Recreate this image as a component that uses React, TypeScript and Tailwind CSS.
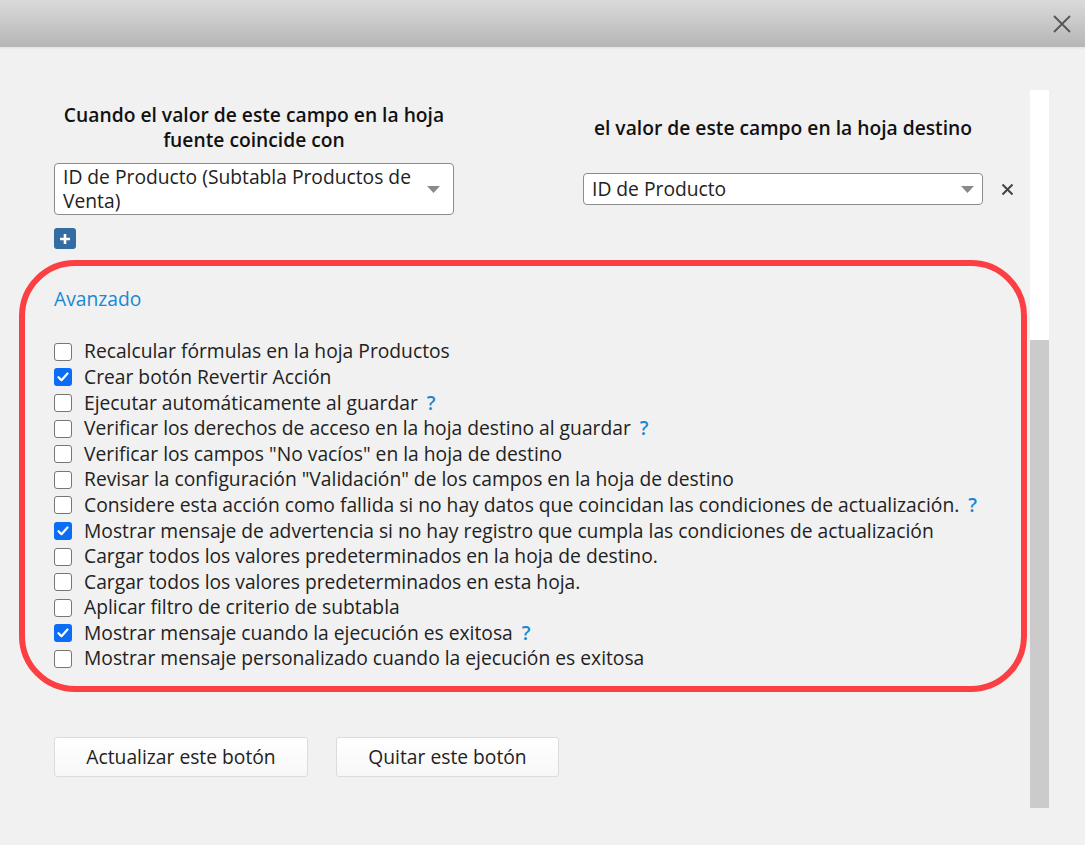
import React from 'react'

interface Option {
    label : string;
    checked ? : boolean;
    help ? : boolean;
}

const options : Option[] = [
    { label: 'Recalcular fórmulas en la hoja Productos' },
    { label: 'Crear botón Revertir Acción', checked: true },
    { label: 'Ejecutar automáticamente al guardar', help: true },
    { label: 'Verificar los derechos de acceso en la hoja destino al guardar', help: true },
    { label: 'Verificar los campos "No vacíos" en la hoja de destino' },
    { label: 'Revisar la configuración "Validación" de los campos en la hoja de destino' },
    { label: 'Considere esta acción como fallida si no hay datos que coincidan las condiciones de actualización.', help: true },
    { label: 'Mostrar mensaje de advertencia si no hay registro que cumpla las condiciones de actualización', checked: true },
    { label: 'Cargar todos los valores predeterminados en la hoja de destino.' },
    { label: 'Cargar todos los valores predeterminados en esta hoja.' },
    { label: 'Aplicar filtro de criterio de subtabla' },
    { label: 'Mostrar mensaje cuando la ejecución es exitosa', checked: true, help: true },
    { label: 'Mostrar mensaje personalizado cuando la ejecución es exitosa' },
]

const Arrow = () => (
    <svg width="13" height="7" viewBox="0 0 13 7" className="shrink-0">
        <path d="M0 0 L13 0 L6.5 7 Z" fill="#8a8a8a" />
    </svg>
)

const CheckBox = ({checked} : {checked ? : boolean}) => (
    checked ? (
        <div className="size-[18px] shrink-0 rounded-[3px] bg-[#0b6cf5] flex items-center justify-center">
            <svg width="12" height="10" viewBox="0 0 12 10">
                <path d="M1.5 5.2 L4.5 8.2 L10.5 1.5" fill="none" stroke="white" strokeWidth="2.2" strokeLinecap="round" strokeLinejoin="round" />
            </svg>
        </div>
    ) : (
        <div className="size-[18px] shrink-0 rounded-[3px] border border-[#767676] bg-white" />
    )
)

export default function App() {
  return (
    <div className="w-[1085px] h-[845px] bg-[#f1f1f1] overflow-hidden text-[#222] text-[19.25px]" style={{ fontFamily: '"Open Sans", "Noto Sans", sans-serif' }}>
      {/* title bar */}
      <div className="h-[47px] bg-gradient-to-b from-[#dadada] to-[#b6b6b6] flex items-center justify-end pr-[13px]">
          <svg width="20" height="20" viewBox="0 0 20 20">
              <path d="M2 2 L18 18 M18 2 L2 18" stroke="#555" strokeWidth="1.8" />
          </svg>
      </div>
      <div className="h-[3px] bg-gradient-to-b from-[#e4e4e4] to-[#f1f1f1]" />

      <div className="flex">
        <div className="w-[1030px] pt-[52px]">
          {/* matching fields */}
          <div className="flex items-center pl-[54px]">
              <div className="w-[400px] text-center font-semibold text-[#111] leading-[25px]">
                  Cuando el valor de este campo en la hoja<br />fuente coincide con
              </div>
              <div className="w-[400px] ml-[129px] text-center font-semibold text-[#111] leading-[25px]">
                  el valor de este campo en la hoja destino
              </div>
          </div>
          <div className="flex items-center pl-[54px] mt-[11px]">
              <div className="w-[400px] h-[52px] bg-white border border-[#8c8c8c] rounded-[4px] flex items-center pl-[8px] pr-[13px]">
                  <div className="flex-1 leading-[24px]">ID de Producto (Subtabla Productos de Venta)</div>
                  <Arrow />
              </div>
              <div className="w-[400px] ml-[129px] h-[32px] bg-white border border-[#8c8c8c] rounded-[4px] flex items-center pl-[8px] pr-[8px]">
                  <div className="flex-1">ID de Producto</div>
                  <Arrow />
              </div>
              <svg width="13" height="13" viewBox="0 0 13 13" className="ml-[18px]">
                  <path d="M1.5 1.5 L11.5 11.5 M11.5 1.5 L1.5 11.5" stroke="#444" strokeWidth="2" />
              </svg>
          </div>
          <div className="pl-[54px] mt-[13px]">
              <div className="w-[22px] h-[21px] rounded-[3px] bg-[#336ba3] flex items-center justify-center">
                  <svg width="12" height="12" viewBox="0 0 12 12">
                      <path d="M6 1 V11 M1 6 H11" stroke="white" strokeWidth="2.6" />
                  </svg>
              </div>
          </div>

          {/* advanced options */}
          <div className="ml-[19px] w-[1008px] mt-[11px] h-[432px] border-[6px] border-[#fc3f42] rounded-[56px] pl-[29px] pt-[20px]">
              <div className="text-[#1a88d2] leading-[25px]">Avanzado</div>
              <div className="mt-[28px] flex flex-col">
                  {options.map((o, i) => (
                      <div key={i} className="flex items-center h-[25.6px] gap-[12px]">
                          <CheckBox checked={o.checked} />
                          <span className="whitespace-nowrap">
                              {o.label}
                              {o.help && <span className="ml-[9px] text-[#1a88d2] font-semibold">?</span>}
                          </span>
                      </div>
                  ))}
              </div>
          </div>

          <div className="flex gap-[28px] pl-[54px] mt-[45px]">
              <button className="w-[254px] h-[40px] bg-gradient-to-b from-white to-[#f7f7f7] border border-[#dcdcdc] rounded-[3px] text-[#222]">
                  Actualizar este botón
              </button>
              <button className="w-[223px] h-[40px] bg-gradient-to-b from-white to-[#f7f7f7] border border-[#dcdcdc] rounded-[3px] text-[#222]">
                  Quitar este botón
              </button>
          </div>
        </div>

        {/* scrollbar */}
        <div className="w-[19px] mt-[40px] flex flex-col">
            <div className="h-[250px] bg-white" />
            <div className="h-[468px] bg-[#cbcbcb]" />
        </div>
      </div>
    </div>
  )
}
